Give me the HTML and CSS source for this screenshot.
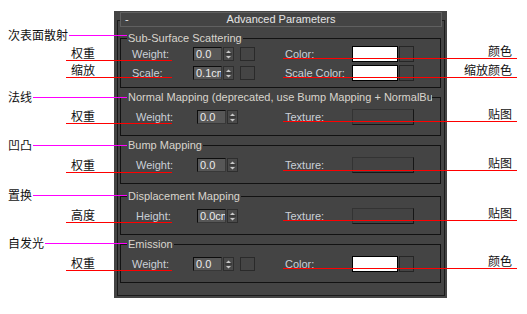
FILE: index.html
```html
<!DOCTYPE html>
<html lang="zh-CN">
<head>
  <meta charset="UTF-8">
  <title>Advanced Parameters</title>
  <link rel="stylesheet" href="styles.css">
</head>
<body>
  <div class="panel">
    <div class="rollout-head">
      <span class="minus">-</span>
      <span class="head-title">Advanced Parameters</span>
      <span></span>
    </div>

    <div class="rollout">
      <!-- 次表面散射 -->
      <div class="group group-sss">
        <div class="group-title">Sub-Surface Scattering</div>
        <div class="row">
          <div class="cell-left">
            <span class="label">Weight:</span>
            <span class="field">0.0</span>
            <span class="spinner"><svg viewBox="0 0 9 12" width="9" height="12"><path d="M2 5L4.5 2.5L7 5Z" fill="#c9c9c9"/><path d="M1 6H8" stroke="#2c2c2c"/><path d="M2 8L4.5 10.5L7 8Z" fill="#c9c9c9"/></svg></span>
            <span class="map-btn"></span>
          </div>
          <div class="cell-right">
            <span class="label">Color:</span>
            <span class="swatch"></span>
            <span class="map-btn"></span>
          </div>
        </div>
        <div class="row">
          <div class="cell-left">
            <span class="label">Scale:</span>
            <span class="field">0.1cm</span>
            <span class="spinner"><svg viewBox="0 0 9 12" width="9" height="12"><path d="M2 5L4.5 2.5L7 5Z" fill="#c9c9c9"/><path d="M1 6H8" stroke="#2c2c2c"/><path d="M2 8L4.5 10.5L7 8Z" fill="#c9c9c9"/></svg></span>
            <span class="map-btn"></span>
          </div>
          <div class="cell-right">
            <span class="label">Scale Color:</span>
            <span class="swatch"></span>
            <span class="map-btn"></span>
          </div>
        </div>
      </div>

      <!-- 法线 -->
      <div class="group">
        <div class="group-title">Normal Mapping (deprecated, use Bump Mapping + NormalBump)</div>
        <div class="row">
          <div class="cell-left">
            <span class="label">Weight:</span>
            <span class="field">0.0</span>
            <span class="spinner"><svg viewBox="0 0 9 12" width="9" height="12"><path d="M2 5L4.5 2.5L7 5Z" fill="#c9c9c9"/><path d="M1 6H8" stroke="#2c2c2c"/><path d="M2 8L4.5 10.5L7 8Z" fill="#c9c9c9"/></svg></span>
          </div>
          <div class="cell-right">
            <span class="label">Texture:</span>
            <span class="texture"></span>
          </div>
        </div>
      </div>

      <!-- 凹凸 -->
      <div class="group">
        <div class="group-title">Bump Mapping</div>
        <div class="row">
          <div class="cell-left">
            <span class="label">Weight:</span>
            <span class="field">0.0</span>
            <span class="spinner"><svg viewBox="0 0 9 12" width="9" height="12"><path d="M2 5L4.5 2.5L7 5Z" fill="#c9c9c9"/><path d="M1 6H8" stroke="#2c2c2c"/><path d="M2 8L4.5 10.5L7 8Z" fill="#c9c9c9"/></svg></span>
          </div>
          <div class="cell-right">
            <span class="label">Texture:</span>
            <span class="texture"></span>
          </div>
        </div>
      </div>

      <!-- 置换 -->
      <div class="group group-disp">
        <div class="group-title">Displacement Mapping</div>
        <div class="row">
          <div class="cell-left">
            <span class="label">Height:</span>
            <span class="field">0.0cm</span>
            <span class="spinner"><svg viewBox="0 0 9 12" width="9" height="12"><path d="M2 5L4.5 2.5L7 5Z" fill="#c9c9c9"/><path d="M1 6H8" stroke="#2c2c2c"/><path d="M2 8L4.5 10.5L7 8Z" fill="#c9c9c9"/></svg></span>
          </div>
          <div class="cell-right">
            <span class="label">Texture:</span>
            <span class="texture"></span>
          </div>
        </div>
      </div>

      <!-- 自发光 -->
      <div class="group group-emission">
        <div class="group-title">Emission</div>
        <div class="row">
          <div class="cell-left">
            <span class="label">Weight:</span>
            <span class="field">0.0</span>
            <span class="spinner"><svg viewBox="0 0 9 12" width="9" height="12"><path d="M2 5L4.5 2.5L7 5Z" fill="#c9c9c9"/><path d="M1 6H8" stroke="#2c2c2c"/><path d="M2 8L4.5 10.5L7 8Z" fill="#c9c9c9"/></svg></span>
            <span class="map-btn"></span>
          </div>
          <div class="cell-right">
            <span class="label">Color:</span>
            <span class="swatch"></span>
            <span class="map-btn"></span>
          </div>
        </div>
      </div>
    </div>
  </div>

  <!-- 标注 -->
  <div class="note-group" style="top: 29px;"><span>次表面散射</span><i></i></div>
  <div class="note-group" style="top: 91px;"><span>法线</span><i></i></div>
  <div class="note-group" style="top: 139px;"><span>凹凸</span><i></i></div>
  <div class="note-group" style="top: 189px;"><span>置换</span><i></i></div>
  <div class="note-group" style="top: 237px;"><span>自发光</span><i></i></div>

  <div class="note-left" style="top: 47px;">权重</div>
  <div class="note-left" style="top: 64px;">缩放</div>
  <div class="note-left" style="top: 110px;">权重</div>
  <div class="note-left" style="top: 159px;">权重</div>
  <div class="note-left" style="top: 209px;">高度</div>
  <div class="note-left" style="top: 257px;">权重</div>

  <div class="note-right" style="top: 45px;">颜色</div>
  <div class="note-right" style="top: 64px;">缩放颜色</div>
  <div class="note-right" style="top: 108px;">贴图</div>
  <div class="note-right" style="top: 157px;">贴图</div>
  <div class="note-right" style="top: 207px;">贴图</div>
  <div class="note-right" style="top: 255px;">颜色</div>
</body>
</html>
```

FILE: styles.css
```css
/* 基础样式 */
* {
  box-sizing: border-box;
}

body {
  position: relative;
  margin: 0;
  width: 527px;
  height: 314px;
  overflow: hidden;
  background: #ffffff;
  font-family: "Liberation Sans", Arial, sans-serif;
  font-size: 11px;
}

/* 面板 */
.panel {
  margin: 11px 0 0 114px;
  width: 333px;
  padding: 1px 0 2px;
  background: #444444;
}

.rollout-head {
  position: relative;
  z-index: 1;
  margin-left: 6px;
  width: 322px;
  height: 15px;
  border: 1px solid #606060;
  background: #444444;
  display: grid;
  grid-template-columns: 1fr auto 1fr;
  align-items: center;
  color: #e4e4e4;
  line-height: 13px;
}

.minus {
  padding-left: 4px;
}

.rollout {
  margin: -7px 0 0 3px;
  width: 328px;
  border: 1px solid #1b1b1b;
  padding-bottom: 12px;
}

/* 分组框 */
.group {
  margin: 9px 3px 0 2px;
  border: 1px solid #121212;
  padding-bottom: 10px;
}

.group-sss {
  margin-top: 17px;
  padding-bottom: 6px;
}

.group-disp {
  margin-top: 12px;
}

.group-title {
  margin: -7px 0 0 6px;
  padding: 0 1px;
  width: fit-content;
  max-width: 305px;
  background: #444444;
  color: #d9d5cd;
  line-height: 13px;
  white-space: nowrap;
  overflow: hidden;
}

/* 行 */
.row {
  display: flex;
  align-items: center;
  height: 16px;
  margin-top: 5px;
}

.group-sss .row {
  margin-top: 1px;
}

.group-sss .row + .row {
  margin-top: 3px;
}

.cell-left {
  width: 164px;
  padding-left: 15px;
  display: flex;
  align-items: center;
}

.group-sss .cell-left,
.group-emission .cell-left {
  padding-left: 11px;
}

.cell-right {
  display: flex;
  align-items: center;
}

.label {
  width: 61px;
  color: #cbd0d8;
  line-height: 13px;
  white-space: nowrap;
}

.cell-right .label {
  width: 67px;
}

/* 控件 */
.field {
  width: 29px;
  height: 14px;
  padding-left: 2px;
  border: 1px solid #0d0d0d;
  border-right-color: #383838;
  border-bottom-color: #383838;
  background: #575757;
  color: #ececec;
  line-height: 12px;
  white-space: nowrap;
  overflow: hidden;
}

.spinner {
  margin-left: 1px;
  width: 11px;
  height: 14px;
  border: 1px solid #2e2e2e;
  background: #4a4a4a;
  display: flex;
}

.map-btn {
  margin-left: 6px;
  width: 15px;
  height: 14px;
  border: 1px solid #2a2a2a;
  background: #454545;
}

.swatch {
  width: 46px;
  height: 16px;
  border: 1px solid #000000;
  background: #ffffff;
}

.cell-right .map-btn {
  margin-left: 1px;
  height: 16px;
  border-color: #262626;
}

.texture {
  width: 62px;
  height: 16px;
  border: 1px solid #333333;
  border-right-color: #161616;
  border-bottom-color: #161616;
  background: #434343;
}

/* 标注 */
.note-group,
.note-left,
.note-right {
  position: absolute;
  font-family: "Noto Sans CJK SC", sans-serif;
  font-size: 12px;
  line-height: 12px;
  color: #111111;
}

.note-group {
  left: 8px;
  width: 119px;
  height: 12px;
  display: flex;
  align-items: flex-start;
}

.note-group i {
  flex: 1;
  height: 1px;
  margin: 6px 0 0 1px;
  background: #ff00ff;
}

.note-left {
  left: 66px;
  width: 106px;
  padding: 0 0 1px 5px;
  border-bottom: 1px solid #ff0000;
}

.note-right {
  left: 283px;
  width: 234px;
  padding: 0 5px 1px 0;
  border-bottom: 1px solid #ff0000;
  text-align: right;
}
```
